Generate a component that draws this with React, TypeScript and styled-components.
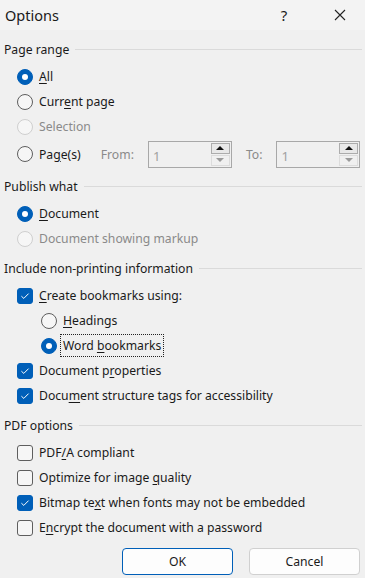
import React from 'react';
import styled, { createGlobalStyle } from 'styled-components';

const GlobalStyle = createGlobalStyle`
  body {
    margin: 0;
    background: #f0f0f0;
    font-family: "Noto Sans", "Open Sans", sans-serif;
    color: #1a1a1a;
  }
`;

const Dialog = styled.div`
  width: 365px;
  height: 578px;
  background: #f0f0f0;
  display: flex;
  flex-direction: column;
  font-size: 12.2px;
`;

const TitleBar = styled.div`
  height: 30px;
  background: #f3f3f3;
  display: flex;
  align-items: center;
  padding-left: 5px;
  font-size: 14.5px;
`;

const Title = styled.div`
  flex: 1;
`;

const TitleButton = styled.div<{ wide?: boolean }>`
  width: ${({ wide }) => (wide ? 62 : 50)}px;
  height: 30px;
  display: flex;
  align-items: center;
  justify-content: center;
  font-size: 15px;
`;

const Body = styled.div`
  display: flex;
  flex-direction: column;
  padding: 8px 3px 0 4px;
`;

const GroupHeader = styled.div`
  display: flex;
  align-items: center;
  gap: 6px;
  height: 22px;
  margin-bottom: 4px;

  &::after {
    content: '';
    flex: 1;
    height: 1px;
    background: #dadada;
  }
`;

const Group = styled.div`
  display: flex;
  flex-direction: column;
  margin-bottom: 6px;
`;

const Row = styled.div<{ indent?: number; tall?: boolean }>`
  height: ${({ tall }) => (tall ? 30 : 25)}px;
  display: flex;
  align-items: center;
  padding-left: ${({ indent = 0 }) => 13 + indent * 24}px;
`;

const Label = styled.span<{ disabled?: boolean; focused?: boolean }>`
  margin-left: ${({ focused }) => (focused ? 4 : 6)}px;
  color: ${({ disabled }) => (disabled ? '#8a8a8a' : '#1a1a1a')};
  padding: ${({ focused }) => (focused ? '2px 2px' : '2px 0')};
  outline: ${({ focused }) => (focused ? '1px dotted #222' : 'none')};
  white-space: nowrap;
`;

const Key = styled.u`
  text-underline-offset: 2px;
`;

const RadioCircle = styled.span<{ checked?: boolean; disabled?: boolean }>`
  width: 16px;
  height: 16px;
  box-sizing: border-box;
  border-radius: 50%;
  flex: none;
  display: flex;
  align-items: center;
  justify-content: center;
  background: ${({ checked }) => (checked ? '#005fb8' : '#f6f6f6')};
  border: 1px solid ${({ checked, disabled }) => (checked ? '#005fb8' : disabled ? '#cfcfcf' : '#5e5e5e')};

  &::after {
    content: '';
    display: ${({ checked }) => (checked ? 'block' : 'none')};
    width: 6px;
    height: 6px;
    border-radius: 50%;
    background: #fff;
  }
`;

const CheckBox = styled.span<{ checked?: boolean }>`
  width: 16px;
  height: 16px;
  box-sizing: border-box;
  border-radius: 3px;
  flex: none;
  display: flex;
  align-items: center;
  justify-content: center;
  background: ${({ checked }) => (checked ? '#005fb8' : '#f6f6f6')};
  border: 1px solid ${({ checked }) => (checked ? '#005fb8' : '#5e5e5e')};
`;

const SpinLabel = styled.span<{ first?: boolean }>`
  color: #8a8a8a;
  margin-left: ${({ first }) => (first ? 20 : 14)}px;
  margin-right: 14px;
`;

const SpinBox = styled.div`
  width: 84px;
  height: 27px;
  box-sizing: border-box;
  border: 1px solid #a8a8a8;
  display: flex;
  background: #f0f0f0;
`;

const SpinValue = styled.div`
  flex: 1;
  padding: 5px 0 0 4px;
  color: #a0a0a0;
  font-size: 13px;
`;

const SpinButtons = styled.div`
  width: 19px;
  display: flex;
  flex-direction: column;
  gap: 1px;
  padding: 1px 1px 1px 0;
`;

const SpinButton = styled.div<{ up?: boolean }>`
  flex: 1;
  box-sizing: border-box;
  border: 1px solid ${({ up }) => (up ? '#acacac' : '#dcdcdc')};
  background: ${({ up }) => (up ? '#e8e8e8' : '#f0f0f0')};
  display: flex;
  align-items: center;
  justify-content: center;

  &::after {
    content: '';
    border-left: 4px solid transparent;
    border-right: 4px solid transparent;
    ${({ up }) => (up ? 'border-bottom: 4px solid #111;' : 'border-top: 4px solid #9a9a9a;')}
  }
`;

const ButtonBar = styled.div`
  display: flex;
  justify-content: flex-end;
  gap: 16px;
  margin-top: 2px;
  padding-right: 2px;
`;

const Button = styled.button<{ primary?: boolean }>`
  width: 111px;
  height: 27px;
  font-family: inherit;
  font-size: 12.2px;
  color: #1a1a1a;
  background: #fdfdfd;
  border: 1px solid ${({ primary }) => (primary ? '#005fb8' : '#d0d0d0')};
  border-radius: 4px;
`;

function Check() {
  return (
    <svg width="10" height="8" viewBox="0 0 10 8">
      <path d="M1.4 4.2 L3.8 6.4 L8.6 1.6" fill="none" stroke="#fff" strokeWidth="1" />
    </svg>
  );
}

type OptionProps = {
  kind: 'radio' | 'check';
  checked?: boolean;
  disabled?: boolean;
  focused?: boolean;
  indent?: number;
  tall?: boolean;
  children: React.ReactNode;
  extra?: React.ReactNode;
};

function Option({ kind, checked, disabled, focused, indent, tall, children, extra }: OptionProps) {
  return (
    <Row indent={indent} tall={tall}>
      {kind === 'radio'
        ? <RadioCircle checked={checked} disabled={disabled} />
        : <CheckBox checked={checked}>{checked && <Check />}</CheckBox>}
      <Label disabled={disabled} focused={focused}>{children}</Label>
      {extra}
    </Row>
  );
}

function Spin() {
  return (
    <SpinBox>
      <SpinValue>1</SpinValue>
      <SpinButtons>
        <SpinButton up />
        <SpinButton />
      </SpinButtons>
    </SpinBox>
  );
}

export default function App() {
  return (
    <>
      <GlobalStyle />
      <Dialog>
        <TitleBar>
          <Title>Options</Title>
          <TitleButton wide>?</TitleButton>
          <TitleButton>
            <svg width="12" height="12" viewBox="0 0 12 12">
              <path d="M1 1 L11 11 M11 1 L1 11" stroke="#222" strokeWidth="1.1" />
            </svg>
          </TitleButton>
        </TitleBar>
        <Body>
          <Group>
            <GroupHeader>Page range</GroupHeader>
            <Option kind="radio" checked><Key>A</Key>ll</Option>
            <Option kind="radio">Curr<Key>e</Key>nt page</Option>
            <Option kind="radio" disabled>Selection</Option>
            <Option
              kind="radio"
              tall
              extra={<>
                <SpinLabel first>From:</SpinLabel>
                <Spin />
                <SpinLabel>To:</SpinLabel>
                <Spin />
              </>}
            >
              Pa<Key>g</Key>e(s)
            </Option>
          </Group>
          <Group>
            <GroupHeader>Publish what</GroupHeader>
            <Option kind="radio" checked><Key>D</Key>ocument</Option>
            <Option kind="radio" disabled>Document showing markup</Option>
          </Group>
          <Group>
            <GroupHeader>Include non-printing information</GroupHeader>
            <Option kind="check" checked><Key>C</Key>reate bookmarks using:</Option>
            <Option kind="radio" indent={1}><Key>H</Key>eadings</Option>
            <Option kind="radio" indent={1} checked focused>Word <Key>b</Key>ookmarks</Option>
            <Option kind="check" checked>Document p<Key>r</Key>operties</Option>
            <Option kind="check" checked>Docu<Key>m</Key>ent structure tags for accessibility</Option>
          </Group>
          <Group>
            <GroupHeader>PDF options</GroupHeader>
            <Option kind="check">PDF<Key>/</Key>A compliant</Option>
            <Option kind="check">Optimize for image <Key>q</Key>uality</Option>
            <Option kind="check" checked>Bitmap te<Key>x</Key>t when fonts may not be embedded</Option>
            <Option kind="check">E<Key>n</Key>crypt the document with a password</Option>
          </Group>
          <ButtonBar>
            <Button primary>OK</Button>
            <Button>Cancel</Button>
          </ButtonBar>
        </Body>
      </Dialog>
    </>
  );
}
